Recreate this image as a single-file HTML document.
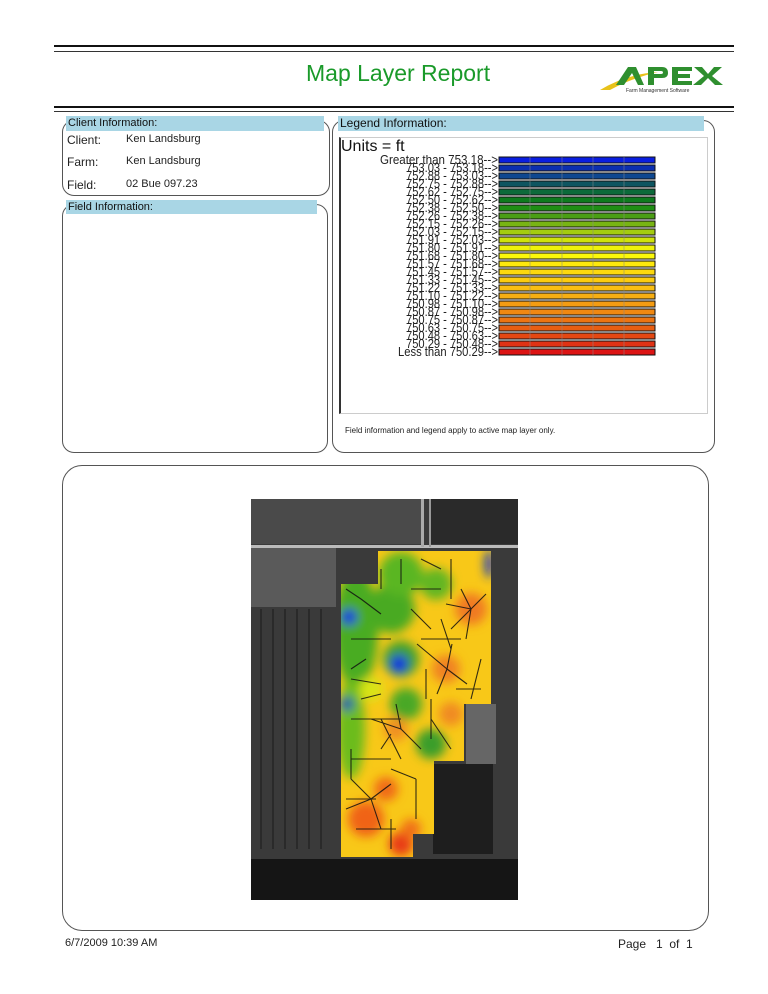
<!DOCTYPE html>
<html><head><meta charset="utf-8"><style>
body{margin:0;background:#fff;width:768px;height:994px;position:relative;overflow:hidden;font-family:"Liberation Sans",Arial,sans-serif;}
.a{position:absolute}
.box{position:absolute;border:1px solid #555;border-radius:12px;box-sizing:border-box}
.hdr{position:absolute;background:#a9d6e5;font-size:11px;color:#111;padding-left:2px;line-height:14px;box-sizing:border-box}
.lbl{position:absolute;font-size:12px;color:#222}
</style></head><body>
<div class="a" style="left:54px;top:45px;width:680px;height:2px;background:#111"></div>
<div class="a" style="left:54px;top:51px;width:680px;height:1px;background:#333"></div>
<div class="a" style="left:306px;top:60px;font-size:23px;color:#1a9a2a">Map Layer Report</div>
<svg class="a" style="left:596px;top:60px" width="140" height="36" viewBox="0 0 140 36">
<path d="M4 30 Q30 14 62 12 Q36 18 14 30Z" fill="#e8c21a"/>
<path d="M20 25 L32 7 L40 7 L48 25 L42 25 L36 13 L28 25Z" fill="#2f8f2f"/>
<path d="M52 25 V7 H66 Q72 7 72 13 Q72 18 66 18 H58 V25Z M58 11 V14 H65 Q67 14 67 12.5 Q67 11 65 11Z" fill="#2f8f2f" fill-rule="evenodd"/>
<path d="M76 7 H96 V11 H82 V14 H94 V18 H82 V21 H96 V25 H76Z" fill="#2f8f2f"/>
<path d="M98 7 H106 L112 14 L118 7 H126 L116 16 L127 25 H119 L112 18 L105 25 H97 L108 16Z" fill="#2f8f2f"/>
<text x="30" y="32" font-size="5" fill="#333" font-family="Liberation Sans">Farm Management Software</text>
</svg>
<div class="a" style="left:54px;top:106px;width:680px;height:2px;background:#111"></div>
<div class="a" style="left:54px;top:111px;width:680px;height:1px;background:#333"></div>

<div class="box" style="left:62px;top:120px;width:268px;height:76px"></div>
<div class="hdr" style="left:66px;top:116px;width:258px;height:15px">Client Information:</div>
<div class="lbl" style="left:67px;top:133px;">Client:</div><div class="lbl" style="left:126px;top:133px;font-size:11px">Ken Landsburg</div>
<div class="lbl" style="left:67px;top:155px;">Farm:</div><div class="lbl" style="left:126px;top:155px;font-size:11px">Ken Landsburg</div>
<div class="lbl" style="left:67px;top:178px;">Field:</div><div class="lbl" style="left:126px;top:178px;font-size:11px">02 Bue 097.23</div>

<div class="box" style="left:62px;top:204px;width:266px;height:249px"></div>
<div class="hdr" style="left:66px;top:200px;width:251px;height:14px">Field Information:</div>

<div class="box" style="left:332px;top:120px;width:383px;height:333px"></div>
<div class="hdr" style="left:338px;top:116px;width:366px;height:15px;font-size:12px">Legend Information:</div>
<div class="a" style="left:339px;top:137px;width:369px;height:277px;border:1px solid #ccc;border-left:2px solid #333;box-sizing:border-box"></div>
<div class="a" style="left:341px;top:138px;font-size:16px;color:#111">Units = ft</div>
<svg class="a" style="left:340px;top:155px" width="330" height="205" viewBox="0 0 330 205" font-family="Liberation Sans" font-size="13" fill="#222">
<g text-anchor="end" lengthAdjust="spacingAndGlyphs">
<text x="158" y="9" textLength="118" lengthAdjust="spacingAndGlyphs">Greater than 753.18--&gt;</text>
<text x="158" y="17" textLength="92" lengthAdjust="spacingAndGlyphs">753.03 - 753.18--&gt;</text>
<text x="158" y="25" textLength="92" lengthAdjust="spacingAndGlyphs">752.88 - 753.03--&gt;</text>
<text x="158" y="33" textLength="92" lengthAdjust="spacingAndGlyphs">752.75 - 752.88--&gt;</text>
<text x="158" y="41" textLength="92" lengthAdjust="spacingAndGlyphs">752.62 - 752.75--&gt;</text>
<text x="158" y="49" textLength="92" lengthAdjust="spacingAndGlyphs">752.50 - 752.62--&gt;</text>
<text x="158" y="57" textLength="92" lengthAdjust="spacingAndGlyphs">752.38 - 752.50--&gt;</text>
<text x="158" y="65" textLength="92" lengthAdjust="spacingAndGlyphs">752.26 - 752.38--&gt;</text>
<text x="158" y="73" textLength="92" lengthAdjust="spacingAndGlyphs">752.15 - 752.26--&gt;</text>
<text x="158" y="81" textLength="92" lengthAdjust="spacingAndGlyphs">752.03 - 752.15--&gt;</text>
<text x="158" y="89" textLength="92" lengthAdjust="spacingAndGlyphs">751.91 - 752.03--&gt;</text>
<text x="158" y="97" textLength="92" lengthAdjust="spacingAndGlyphs">751.80 - 751.91--&gt;</text>
<text x="158" y="105" textLength="92" lengthAdjust="spacingAndGlyphs">751.68 - 751.80--&gt;</text>
<text x="158" y="113" textLength="92" lengthAdjust="spacingAndGlyphs">751.57 - 751.68--&gt;</text>
<text x="158" y="121" textLength="92" lengthAdjust="spacingAndGlyphs">751.45 - 751.57--&gt;</text>
<text x="158" y="129" textLength="92" lengthAdjust="spacingAndGlyphs">751.33 - 751.45--&gt;</text>
<text x="158" y="137" textLength="92" lengthAdjust="spacingAndGlyphs">751.22 - 751.33--&gt;</text>
<text x="158" y="145" textLength="92" lengthAdjust="spacingAndGlyphs">751.10 - 751.22--&gt;</text>
<text x="158" y="153" textLength="92" lengthAdjust="spacingAndGlyphs">750.98 - 751.10--&gt;</text>
<text x="158" y="161" textLength="92" lengthAdjust="spacingAndGlyphs">750.87 - 750.98--&gt;</text>
<text x="158" y="169" textLength="92" lengthAdjust="spacingAndGlyphs">750.75 - 750.87--&gt;</text>
<text x="158" y="177" textLength="92" lengthAdjust="spacingAndGlyphs">750.63 - 750.75--&gt;</text>
<text x="158" y="185" textLength="92" lengthAdjust="spacingAndGlyphs">750.48 - 750.63--&gt;</text>
<text x="158" y="193" textLength="92" lengthAdjust="spacingAndGlyphs">750.29 - 750.48--&gt;</text>
<text x="158" y="201" textLength="100" lengthAdjust="spacingAndGlyphs">Less than 750.29--&gt;</text>
</g>
<g stroke="#111" stroke-width="1">
<rect x="159" y="2" width="156" height="6" fill="#0a1ee0"/>
<rect x="159" y="10" width="156" height="6" fill="#0c2fb0"/>
<rect x="159" y="18" width="156" height="6" fill="#0d4790"/>
<rect x="159" y="26" width="156" height="6" fill="#0d5560"/>
<rect x="159" y="34" width="156" height="6" fill="#0c6a3a"/>
<rect x="159" y="42" width="156" height="6" fill="#0e7a1e"/>
<rect x="159" y="50" width="156" height="6" fill="#1f8e14"/>
<rect x="159" y="58" width="156" height="6" fill="#4a9e14"/>
<rect x="159" y="66" width="156" height="6" fill="#78b414"/>
<rect x="159" y="74" width="156" height="6" fill="#a4cc10"/>
<rect x="159" y="82" width="156" height="6" fill="#cfe20c"/>
<rect x="159" y="90" width="156" height="6" fill="#eef20a"/>
<rect x="159" y="98" width="156" height="6" fill="#fbf80a"/>
<rect x="159" y="106" width="156" height="6" fill="#fde80c"/>
<rect x="159" y="114" width="156" height="6" fill="#fcd80e"/>
<rect x="159" y="122" width="156" height="6" fill="#fbcb10"/>
<rect x="159" y="130" width="156" height="6" fill="#f9be12"/>
<rect x="159" y="138" width="156" height="6" fill="#f7ae12"/>
<rect x="159" y="146" width="156" height="6" fill="#f49c12"/>
<rect x="159" y="154" width="156" height="6" fill="#f08812"/>
<rect x="159" y="162" width="156" height="6" fill="#ec7412"/>
<rect x="159" y="170" width="156" height="6" fill="#e85e12"/>
<rect x="159" y="178" width="156" height="6" fill="#e44812"/>
<rect x="159" y="186" width="156" height="6" fill="#e03214"/>
<rect x="159" y="194" width="156" height="6" fill="#dc1414"/>
</g>
<g stroke="#888" stroke-width="0.5"><line x1="190" y1="2" x2="190" y2="200"/><line x1="222" y1="2" x2="222" y2="200"/><line x1="253" y1="2" x2="253" y2="200"/><line x1="284" y1="2" x2="284" y2="200"/></g>
</svg>
<div class="a" style="left:345px;top:426px;font-size:8px;color:#222">Field information and legend apply to active map layer only.</div>

<div class="box" style="left:62px;top:465px;width:647px;height:466px;border-radius:20px"></div>
<svg class="a" style="left:251px;top:499px" width="267" height="401" viewBox="0 0 267 401">
<defs>
<clipPath id="f"><polygon points="127,52 240,52 240,205 213,205 213,262 183,262 183,335 162,335 162,358 90,358 90,85 127,85"/></clipPath>
<filter id="b" x="-50%" y="-50%" width="200%" height="200%"><feGaussianBlur stdDeviation="5"/></filter>
</defs>
<rect width="267" height="401" fill="#3a3a3a"/>
<rect x="0" y="0" width="170" height="45" fill="#4a4a4a"/>
<rect x="180" y="0" width="87" height="45" fill="#2a2a2a"/>
<rect x="0" y="48" width="85" height="60" fill="#5a5a5a"/>
<rect x="0" y="110" width="85" height="240" fill="#3a3a3a"/>
<g stroke="#2a2a2a" stroke-width="2"><path d="M10 110V350M22 110V350M34 110V350M46 110V350M58 110V350M70 110V350"/></g>
<rect x="0" y="360" width="267" height="41" fill="#151515"/>
<rect x="182" y="265" width="60" height="90" fill="#1e1e1e"/>
<rect x="215" y="205" width="30" height="60" fill="#666"/>
<rect x="0" y="46" width="267" height="3" fill="#bbb"/>
<rect x="170" y="0" width="3" height="48" fill="#aaa"/>
<rect x="178" y="0" width="2" height="48" fill="#999"/>
<g clip-path="url(#f)">
<rect width="267" height="401" fill="#f8c818"/>
<g filter="url(#b)">
<ellipse cx="105" cy="130" rx="22" ry="60" fill="#4aac22"/>
<ellipse cx="100" cy="230" rx="14" ry="50" fill="#6cbc1c"/>
<circle cx="140" cy="110" r="24" fill="#4aaa24"/>
<circle cx="150" cy="75" r="22" fill="#5ab624"/>
<circle cx="185" cy="85" r="16" fill="#62b624"/>
<circle cx="150" cy="160" r="18" fill="#3fa02a"/>
<circle cx="155" cy="205" r="16" fill="#48a828"/>
<circle cx="180" cy="245" r="15" fill="#3a9e2a"/>
<circle cx="120" cy="190" r="12" fill="#d8e418"/>
<circle cx="98" cy="118" r="8" fill="#0a28e0"/>
<circle cx="96" cy="205" r="7" fill="#1050b0"/>
<circle cx="148" cy="165" r="9" fill="#0a28e0"/>
<ellipse cx="238" cy="65" rx="4" ry="14" fill="#1030d0"/>
<circle cx="220" cy="110" r="16" fill="#f07a20"/>
<circle cx="195" cy="170" r="14" fill="#f08220"/>
<circle cx="200" cy="215" r="12" fill="#f08a20"/>
<circle cx="115" cy="320" r="18" fill="#f06418"/>
<circle cx="150" cy="345" r="12" fill="#e83a14"/>
<circle cx="135" cy="290" r="12" fill="#f06a18"/>
<circle cx="160" cy="330" r="10" fill="#f07018"/>
<circle cx="145" cy="230" r="12" fill="#f09020"/>
</g>
<g stroke="#111" stroke-width="1.1" fill="none" opacity="0.85">
<path d="M220 110 l-20 20 M220 110 l15 -15 M220 110 l-5 30 M220 110 l-25 -5 M220 110 l-10 -20 M196 170 l-30 -25 M196 170 l20 15 M196 170 l-10 25 M196 170 l5 -25 M150 230 l-30 -10 M150 230 l20 20 M150 230 l-5 -25 M120 300 l-20 -20 M120 300 l10 30 M120 300 l-25 10 M120 300 l20 -15 M110 100 l20 15 M110 100 l-15 -10 M160 90 l30 0 M100 140 l40 0 M100 180 l30 5 M170 140 l40 0 M150 60 l0 25 M200 60 l0 40 M180 200 l0 40 M100 220 l50 0 M100 260 l40 0 M140 350 l0 -30 M130 220 l20 40 M105 330 l40 0 M200 250 l-20 -30 M160 110 l20 20 M170 60 l20 10 M130 70 l0 20 M95 300 l30 0 M140 270 l25 10 M205 190 l25 0 M190 120 l10 30 M115 160 l-15 10 M165 280 l0 40 M100 250 l0 30 M230 160 l-10 40 M175 170 l0 30 M130 250 l10 -15 M110 200 l20 -5"/>
</g>
</g>
</svg>
<div class="a" style="left:65px;top:937px;font-size:11px;color:#222">6/7/2009 10:39 AM</div>
<div class="a" style="left:618px;top:937px;font-size:12px;color:#222">Page &nbsp;&nbsp;1 &nbsp;of &nbsp;1</div>
</body></html>
